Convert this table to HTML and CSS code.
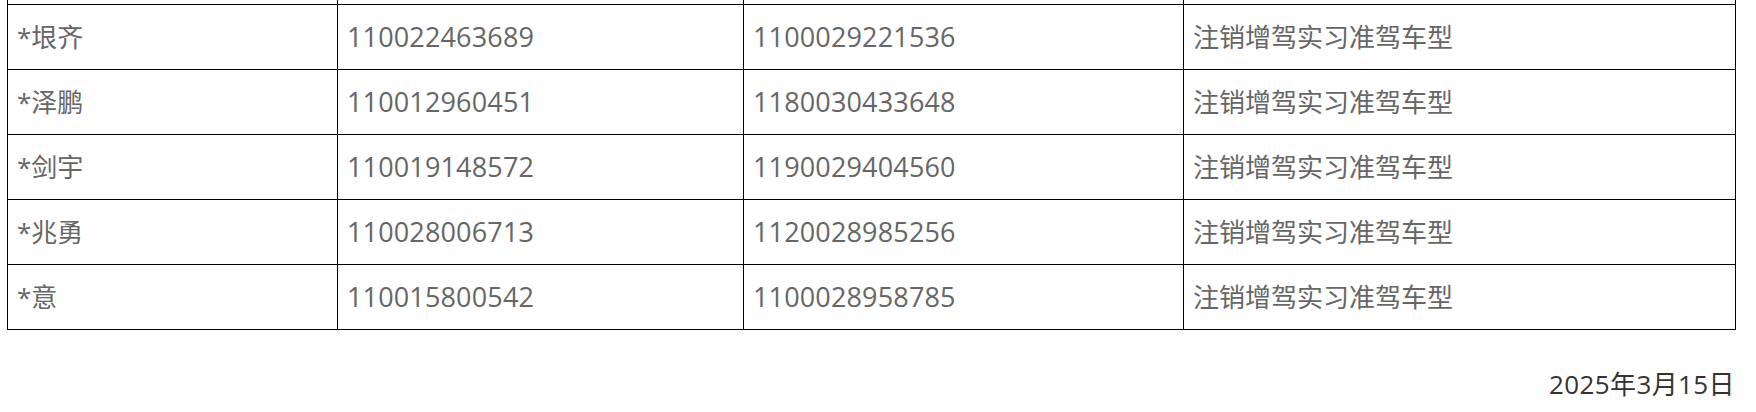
FILE: index.html
```html
<!DOCTYPE html>
<html lang="zh-CN">
<head>
<meta charset="utf-8">
<title>注销增驾名单</title>
<link rel="stylesheet" href="styles.css">
</head>
<body>
<div class="page">
  <table class="list">
    <colgroup>
      <col class="c1"><col class="c2"><col class="c3"><col class="c4">
    </colgroup>
    <tbody>
      <tr class="cut"><td></td><td></td><td></td><td></td></tr>
      <tr><td>*垠齐</td><td class="num">110022463689</td><td class="num">1100029221536</td><td>注销增驾实习准驾车型</td></tr>
      <tr><td>*泽鹏</td><td class="num">110012960451</td><td class="num">1180030433648</td><td>注销增驾实习准驾车型</td></tr>
      <tr><td>*剑宇</td><td class="num">110019148572</td><td class="num">1190029404560</td><td>注销增驾实习准驾车型</td></tr>
      <tr><td>*兆勇</td><td class="num">110028006713</td><td class="num">1120028985256</td><td>注销增驾实习准驾车型</td></tr>
      <tr><td>*意</td><td class="num">110015800542</td><td class="num">1100028958785</td><td>注销增驾实习准驾车型</td></tr>
    </tbody>
  </table>
  <p class="date">2025年3月15日</p>
</div>
</body>
</html>
```

FILE: styles.css
```css
html, body {
  margin: 0;
  padding: 0;
  background: #fff;
}

.page {
  padding: 0 21px 0 7px;
  font-family: "Open Sans", "Noto Sans CJK SC", sans-serif;
  font-size: 26px;
}

.list {
  width: 1728px;
  border-collapse: collapse;
  table-layout: fixed;
}

.c1 { width: 330px; }
.c2 { width: 406px; }
.c3 { width: 440px; }
.c4 { width: 552px; }

.list td {
  border: 1px solid #000;
  height: 65px;
  padding: 0 9px;
  box-sizing: border-box;
  color: #666;
  line-height: 36px;
  vertical-align: middle;
  white-space: nowrap;
}

.list td.num {
  font-size: 27px;
  letter-spacing: 0.15px;
}

.list .cut td {
  height: 4px;
  padding: 0;
  border-top: none;
  line-height: 0;
}

.date {
  margin: 36px 0 0;
  width: 1728px;
  text-align: right;
  color: #333;
  line-height: 36px;
  letter-spacing: 0.4px;
}
```
